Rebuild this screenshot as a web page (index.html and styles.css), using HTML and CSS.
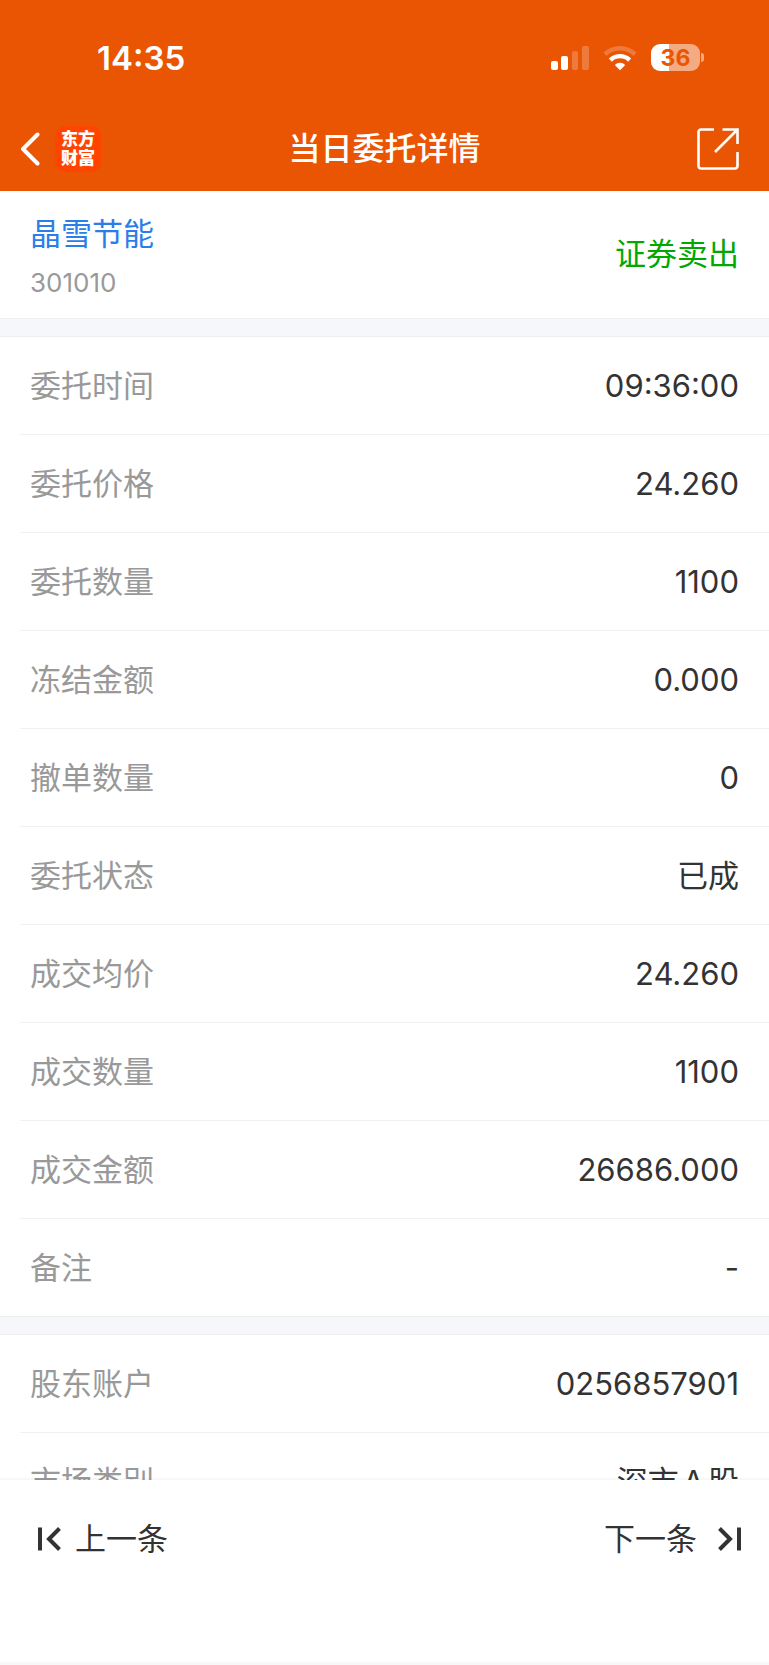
FILE: index.html
```html
<!DOCTYPE html>
<html lang="zh-CN">
<head>
    <meta charset="UTF-8">
    <meta name="viewport" content="width=device-width, initial-scale=1.0">
    <title>当日委托详情</title>
    <link rel="stylesheet" href="styles.css">
</head>
<body>
    <header class="header">
        <div class="status-bar">
            <span class="time">14:35</span>
            <div class="status-icons">
                <svg width="38" height="26" viewBox="0 0 38 26" fill="#fff">
                    <rect x="0" y="16" width="7" height="9" rx="2"/>
                    <rect x="10" y="11" width="7" height="14" rx="2"/>
                    <rect x="21" y="6" width="6" height="19" rx="2" opacity=".22"/>
                    <rect x="31" y="1" width="7" height="24" rx="2" opacity=".22"/>
                </svg>
                <svg width="34" height="26" viewBox="0 0 34 26" fill="none" stroke="#fff" stroke-width="4.4">
                    <path d="M2 9.3A21.5 21.5 0 0 1 32 9.3" opacity=".22"/>
                    <path d="M7.4 15.1A13.6 13.6 0 0 1 26.6 15.1"/>
                    <path d="M17 25.2L11.8 20A7.4 7.4 0 0 1 22.2 20Z" fill="#fff" stroke="none"/>
                </svg>
                <div class="battery">36</div>
            </div>
        </div>
        <nav class="nav-bar">
            <div class="nav-left">
                <button class="icon-btn" aria-label="返回">
                    <svg width="20" height="34" viewBox="0 0 20 34" fill="none" stroke="#fff" stroke-width="4" stroke-linecap="round" stroke-linejoin="round">
                        <path d="M17.5 2.5L3 17L17.5 31.5"/>
                    </svg>
                </button>
                <div class="logo">东方<br>财富</div>
            </div>
            <h1 class="title">当日委托详情</h1>
            <button class="icon-btn share" aria-label="分享">
                <svg width="42" height="42" viewBox="0 0 42 42" fill="none" stroke="#fff" stroke-width="2.6">
                    <path d="M17 1.5H4A2.5 2.5 0 0 0 1.5 4V38A2.5 2.5 0 0 0 4 40.5H38A2.5 2.5 0 0 0 40.5 38V24"/>
                    <path d="M25.5 1.5H40.5V16M40 2L18 24"/>
                </svg>
            </button>
        </nav>
    </header>

    <main class="content">
        <section class="stock">
            <div>
                <a class="stock-name" href="#">晶雪节能</a>
                <div class="stock-code">301010</div>
            </div>
            <span class="side">证券卖出</span>
        </section>

        <dl class="list">
            <div class="row"><dt>委托时间</dt><dd>09:36:00</dd></div>
            <div class="row"><dt>委托价格</dt><dd>24.260</dd></div>
            <div class="row"><dt>委托数量</dt><dd>1100</dd></div>
            <div class="row"><dt>冻结金额</dt><dd>0.000</dd></div>
            <div class="row"><dt>撤单数量</dt><dd>0</dd></div>
            <div class="row"><dt>委托状态</dt><dd>已成</dd></div>
            <div class="row"><dt>成交均价</dt><dd>24.260</dd></div>
            <div class="row"><dt>成交数量</dt><dd>1100</dd></div>
            <div class="row"><dt>成交金额</dt><dd>26686.000</dd></div>
            <div class="row"><dt>备注</dt><dd>-</dd></div>
        </dl>

        <dl class="list">
            <div class="row"><dt>股东账户</dt><dd>0256857901</dd></div>
            <div class="row"><dt>市场类别</dt><dd>深市A股</dd></div>
        </dl>
    </main>

    <footer class="pager">
        <button class="pager-btn">
            <svg width="24" height="24" viewBox="0 0 24 24" fill="none" stroke="#333" stroke-width="4">
                <path d="M2 0.5V23.5M21.5 1.5L11 12L21.5 22.5"/>
            </svg>
            上一条
        </button>
        <button class="pager-btn next">
            下一条
            <svg width="24" height="24" viewBox="0 0 24 24" fill="none" stroke="#333" stroke-width="4">
                <path d="M22 0.5V23.5M2.5 1.5L13 12L2.5 22.5"/>
            </svg>
        </button>
    </footer>
</body>
</html>
```
FILE: styles.css
```css
:root {
    --brand: #ea5504;
    --text: #333;
    --muted: #999;
    --line: #f2f2f2;
    --band: #f5f7fa;
    --band-line: #eee;
}
* {
    box-sizing: border-box;
}
body {
    margin: 0;
    height: 100vh;
    display: flex;
    flex-direction: column;
    font-family: Inter, "Noto Sans CJK SC", sans-serif;
    font-size: 31px;
    line-height: 44px;
    text-autospace: normal;
    color: var(--text);
    background: #fff;
}
button {
    padding: 0;
    border: 0;
    background: none;
    font: inherit;
    color: inherit;
    cursor: pointer;
}
svg {
    display: block;
}

/* header */
.header {
    flex: none;
    background: var(--brand);
    color: #fff;
}
.status-bar {
    display: flex;
    justify-content: space-between;
    align-items: center;
    height: 105px;
    padding: 10px 69px 0 97px;
}
.time {
    font-size: 33px;
    font-weight: 600;
}
.status-icons {
    display: flex;
    align-items: center;
    gap: 14px;
}
.battery {
    position: relative;
    width: 49px;
    height: 27px;
    border-radius: 9px;
    background: linear-gradient(to right, #fff 36%, #f5ab82 36%);
    color: var(--brand);
    font-size: 23px;
    font-weight: 700;
    line-height: 28px;
    text-align: center;
}
.battery::after {
    content: "";
    position: absolute;
    left: 50px;
    top: 9px;
    width: 3px;
    height: 9px;
    border-radius: 0 4px 4px 0;
    background: #f5ab82;
}
.nav-bar {
    display: grid;
    grid-template-columns: 1fr auto 1fr;
    align-items: center;
    height: 86px;
    padding: 2px 30px 0;
}
.nav-left {
    display: flex;
    align-items: center;
    gap: 15px;
    margin-left: -10px;
}
.logo {
    width: 46px;
    height: 46px;
    padding-top: 4px;
    border-radius: 10px;
    background: #ff4400;
    font-size: 17px;
    font-weight: 900;
    line-height: 19px;
    text-align: center;
}
.title {
    margin: 0;
    font-size: 32px;
    font-weight: 500;
}
.share {
    justify-self: end;
}

/* content */
.content {
    flex: 1;
    min-height: 0;
    overflow: hidden;
}
.stock {
    display: flex;
    justify-content: space-between;
    align-items: center;
    padding: 21px 30px 17px;
}
.stock-name {
    display: block;
    color: #2b7de9;
    text-decoration: none;
}
.stock-code {
    margin-top: 9px;
    font-size: 26px;
    line-height: 36px;
    color: var(--muted);
}
.side {
    padding-bottom: 6px;
    color: #00a800;
}
.list {
    margin: 0;
}
.list::before {
    content: "";
    display: block;
    height: 17px;
    border-top: 1px solid var(--band-line);
    border-bottom: 1px solid var(--band-line);
    background: var(--band);
}
.row {
    display: flex;
    justify-content: space-between;
    align-items: center;
    height: 98px;
    margin-left: 20px;
    padding: 0 30px 0 10px;
    border-bottom: 1px solid var(--line);
}
.row:last-child {
    height: 97px;
    border-bottom: 0;
}
.row dt {
    color: var(--muted);
}
.row dd {
    margin: 0;
}

/* bottom pager */
.pager {
    flex: none;
    position: relative;
    display: flex;
    justify-content: space-between;
    align-items: flex-start;
    margin-top: -2px;
    padding: 37px 28px 101px 38px;
    border-top: 2px solid rgba(0, 0, 0, 0.03);
    border-bottom: 3px solid #f8f8f8;
    background: #fff;
    background-clip: padding-box;
}
.pager-btn {
    display: flex;
    align-items: center;
    gap: 13px;
}
.next {
    gap: 20px;
}
```
